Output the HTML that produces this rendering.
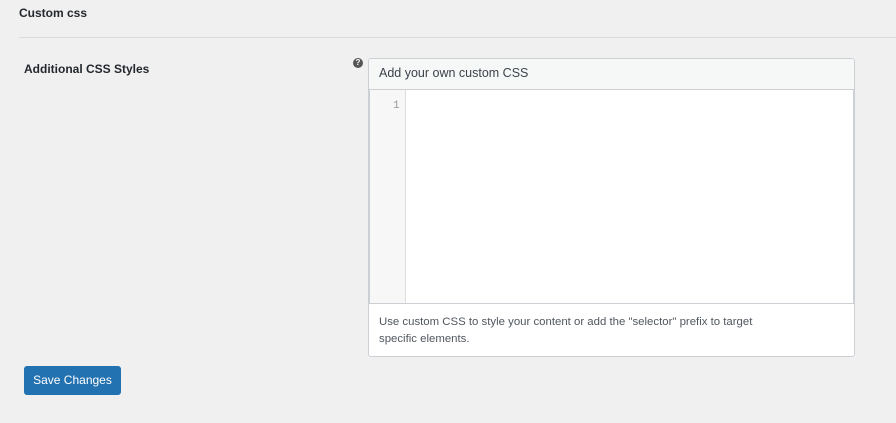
<!DOCTYPE html>
<html><head><style>
body{margin:0;width:896px;height:423px;background:#f0f0f1;font-family:"Liberation Sans",sans-serif;position:relative;overflow:hidden;color:#1d2327}
.a{position:absolute}
</style></head><body>
<div class="a" style="left:19px;top:6px;font-size:12px;font-weight:bold;color:#23282d">Custom css</div>
<div class="a" style="left:19px;top:37px;width:877px;height:1px;background:#dcdcde"></div>
<div class="a" style="left:24px;top:62px;font-size:12px;font-weight:bold;color:#23282d">Additional CSS Styles</div>
<div class="a" style="left:353px;top:58px;width:10px;height:10px;border-radius:50%;background:#555;color:#fff;font-size:8px;font-weight:bold;line-height:10px;text-align:center">?</div>
<div class="a" style="left:368px;top:58px;width:485px;height:297px;border:1px solid #ccd0d4;border-radius:3px;background:#fff"></div>
<div class="a" style="left:369px;top:59px;width:485px;height:30px;background:#f6f7f7;border-radius:3px 3px 0 0"></div>
<div class="a" style="left:379px;top:66px;font-size:12.5px;color:#3c434a">Add your own custom CSS</div>
<div class="a" style="left:369px;top:89px;width:483px;height:213px;border:1px solid #ccd0d4;background:#fff"></div>
<div class="a" style="left:370px;top:90px;width:35px;height:213px;background:#f7f7f7;border-right:1px solid #ddd"></div>
<div class="a" style="left:393px;top:100px;font-size:11px;font-family:'Liberation Mono',monospace;color:#999">1</div>
<div class="a" style="left:379px;top:314px;font-size:11.4px;line-height:17px;color:#50575e;width:400px">Use custom CSS to style your content or add the "selector" prefix to target specific elements.</div>
<div class="a" style="left:24px;top:366px;width:97px;height:29px;background:#2271b1;border-radius:3px;color:#fff;font-size:12px;line-height:29px;text-align:center">Save Changes</div>
</body></html>
